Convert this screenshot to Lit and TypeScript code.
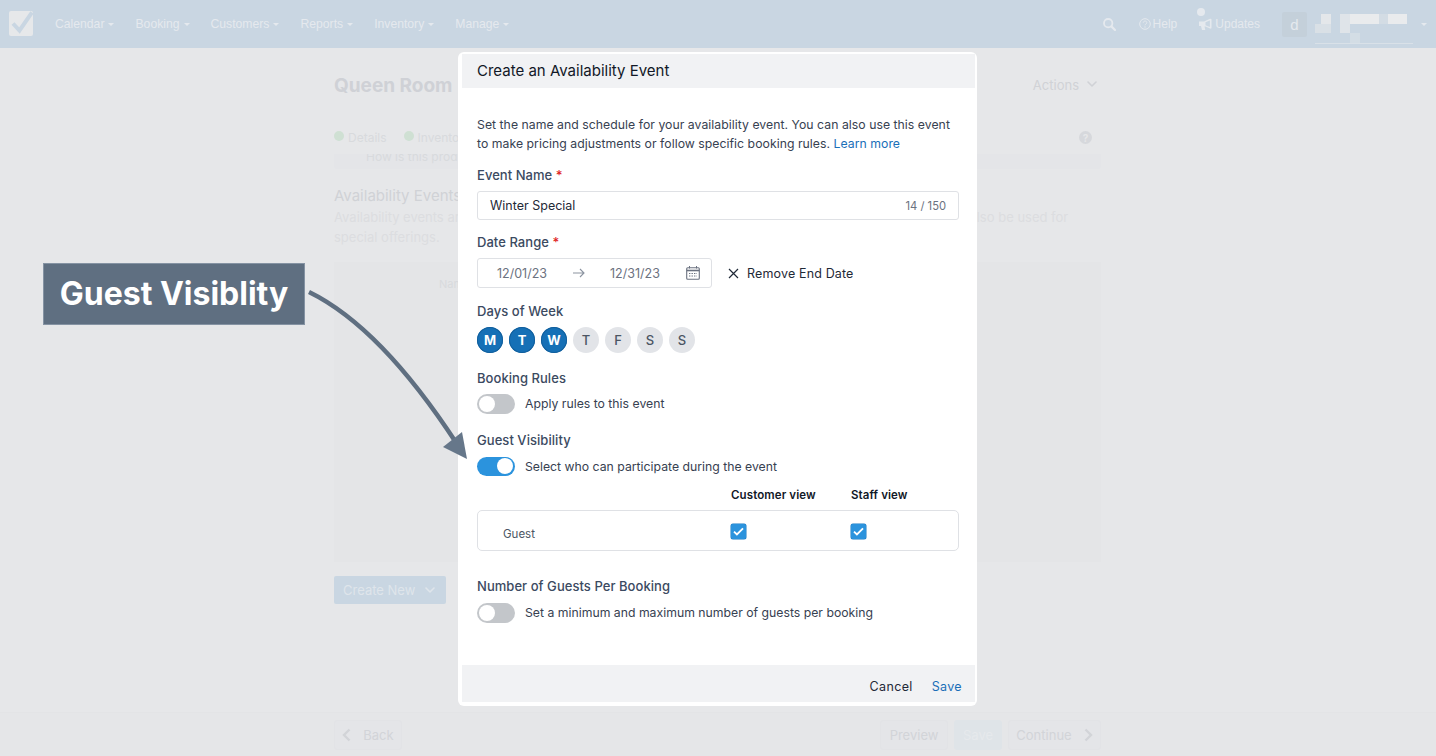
import { LitElement, html, css, svg } from 'lit'
import { customElement } from 'lit/decorators.js'

const NAV = ['Calendar', 'Booking', 'Customers', 'Reports', 'Inventory', 'Manage']
const DAYS = [
  { d: 'M', on: true },
  { d: 'T', on: true },
  { d: 'W', on: true },
  { d: 'T', on: false },
  { d: 'F', on: false },
  { d: 'S', on: false },
  { d: 'S', on: false }
]

const chevronDown = svg`<path d="M1 1l4 4 4-4" fill="none" stroke="currentColor" stroke-width="1.6" stroke-linecap="round" stroke-linejoin="round"/>`
const check = html`<svg class="check" viewBox="0 0 16 16"><path d="M3.2 8.2l3.1 3 6.5-6.600" fill="none" stroke="#fff" stroke-width="2"/></svg>`

@customElement('app-root')
export class AppRoot extends LitElement {
  static styles = css`
    :host {
      display: block;
      position: relative;
      width: 1436px;
      height: 756px;
      overflow: hidden;
      background: #e6e7e9;
      font-family: Inter, 'Liberation Sans', sans-serif;
      color: #d0d2d6;
    }

    /* top bar */
    .top {
      display: flex;
      align-items: center;
      height: 48px;
      background: #c9d6e2;
      color: #e5e9ee;
      font-family: 'Liberation Sans', sans-serif;
      font-size: 12.2px;
      padding: 0 9px 0 8px;
      box-sizing: border-box;
    }
    .logo { width: 25px; height: 26px; margin-right: 22px; flex: none; }
    .nav { display: flex; gap: 21px; }
    .nav span { display: flex; align-items: center; gap: 4px; }
    .caret {
      width: 0; height: 0;
      border-left: 3px solid transparent;
      border-right: 3px solid transparent;
      border-top: 3px solid currentColor;
    }
    .right { margin-left: auto; display: flex; align-items: center; font-size: 12px; }
    .right svg { flex: none; }
    .link { display: flex; align-items: center; gap: 3px; }
    .help { margin: 0 22px 0 23px; gap: 2px; }
    .avatar {
      width: 25px; height: 25px; margin: 1px 8px 0 22px;
      display: flex; align-items: center; justify-content: center;
      background: #c4d0da; border-radius: 2px; font-size: 15px;
    }
    .bell { position: relative; }
    .dot {
      position: absolute; left: -2px; top: -9px;
      width: 8px; height: 8px; border-radius: 50%; background: #e5e9ee;
    }
    .user-caret { margin-left: 8px; }

    /* page behind the dialog */
    .page { width: 767px; margin-left: 334px; height: 664px; }
    .title-row { display: flex; justify-content: space-between; align-items: center; height: 75px; box-sizing: border-box; }
    .title-row h1 { margin: 0; font-size: 19px; font-weight: 700; color: #cfd1d6; }
    .actions { display: flex; align-items: center; gap: 8px; font-size: 13px; color: #d0d2d6; margin: 0 4px 2px 0; }
    .actions svg { width: 10px; height: 7px; }
    .steps { display: flex; align-items: center; gap: 17px; height: 29px; font-size: 12px; color: #d8dadd; }
    .steps span { display: flex; align-items: center; gap: 4px; }
    .steps i { width: 10px; height: 10px; border-radius: 50%; background: #cfe0d3; margin-top: -3px; }
    .qmark {
      margin-left: auto; margin-right: 9px; width: 13px; height: 13px; border-radius: 50%;
      background: #d6d8dc; color: #e6e7e9; font-size: 10px; font-weight: 700;
      display: flex; align-items: center; justify-content: center;
    }
    .how {
      margin: 2px 0 17px; height: 15px; line-height: 6px; overflow: hidden; font-size: 12px; color: #d8dadd;
      padding-left: 32px; background: #e4e5e8; border-radius: 0 0 3px 3px;
      box-sizing: border-box;
    }
    .page h2 { margin: 0 0 1px; font-size: 15px; font-weight: 400; color: #d0d2d6; line-height: 20px; }
    .desc { margin: 0; font-size: 13px; line-height: 20px; color: #dcdde0; white-space: nowrap; }
    .panel {
      margin-top: 15px; height: 300px; padding: 15px 0 0 105px; box-sizing: border-box;
      background: #e4e5e7; font-size: 11px; color: #d8dadd;
    }
    .create {
      margin-top: 14px; width: 112px; height: 28px; border-radius: 2px;
      background: #c9d6e2; color: #dfe5eb; font-size: 13px;
      display: flex; align-items: center; justify-content: space-between; padding: 0 11px 0 9px;
      box-sizing: border-box;
    }
    .create svg { width: 10px; height: 7px; }
    .bar { height: 44px; border-top: 1px solid #e3e4e6; background: #e5e6e8; box-sizing: border-box; }
    .bar-in { display: flex; align-items: center; gap: 6px; width: 767px; height: 43px; margin-left: 334px; }
    .foot {
      display: flex; align-items: center; justify-content: center; gap: 12px;
      height: 30px; border-radius: 3px;
      background: #e4e5e8; border: 1px solid #e2e3e6; font-size: 13px; color: #d2d4d8;
      box-sizing: border-box;
    }
    .foot svg { width: 9px; height: 14px; }
    .foot.back { width: 68px; margin-right: auto; }
    .foot.preview { width: 68px; }
    .foot.primary { width: 48px; background: #dfe4e8; border-color: #dfe4e8; color: #e6e9ec; }
    .foot.next { width: 93px; }

    /* dialog */
    .dialog {
      position: absolute; left: 458px; top: 52px; width: 519px; height: 654px;
      background: #fff; border-radius: 6px; box-sizing: border-box;
      padding: 2px 2px 4px 4px;
      display: flex; flex-direction: column;
      color: #1f2937;
    }
    .d-head {
      height: 34px; display: flex; align-items: center; padding: 0 0 2px 15px; box-sizing: border-box;
      background: #f1f2f4; font-size: 15px; color: #111827; flex: none;
    }
    .d-body {
      flex: 1; padding: 27px 16px 0 15px; font-size: 12.25px; color: #374151;
    }
    .intro { margin: 0 0 14px; line-height: 19px; letter-spacing: 0.03px; }
    a { color: #1a6fb8; text-decoration: none; }
    .label { font-size: 13px; font-weight: 500; line-height: 16px; color: #3b4a61; letter-spacing: 0.05px; }
    .req { color: #e02424; }
    .input {
      display: flex; align-items: center; justify-content: space-between;
      margin-top: 8px; height: 29px; padding: 0 12px;
      border: 1px solid #dfe1e5; border-radius: 3px; box-sizing: border-box;
      color: #1f2937; font-size: 12.5px;
    }
    .count { font-size: 11.2px; color: #6b7280; }
    .date-row { display: flex; align-items: center; margin-top: 8px; font-size: 12.5px; }
    .date {
      display: flex; align-items: center; width: 235px; height: 30px; box-sizing: border-box;
      border: 1px solid #dfe1e5; border-radius: 3px; padding: 0 11px 0 19px; color: #6b7280;
    }
    .date svg.arr { margin: 0 25px 0 26px; }
    .date .cal { margin-left: auto; }
    .remove { display: flex; align-items: center; gap: 8px; margin-left: 16px; color: #1f2937; letter-spacing: 0.15px; }
    .days { display: flex; gap: 6px; margin-top: 8px; }
    .day {
      width: 26px; height: 26px; border-radius: 50%;
      display: flex; align-items: center; justify-content: center;
      background: #e2e4e8; color: #4b5563; font-size: 13px; font-weight: 500;
    }
    .day.on { background: #1670b6; color: #fff; font-weight: 700; box-shadow: inset 0 0 0 1px #125f9c; }
    .sw-row { display: flex; align-items: center; gap: 10px; margin-top: 8px; }
    .sw {
      position: relative; width: 38px; height: 19.5px; border-radius: 10px; background: #c3c6ca; flex: none;
    }
    .sw::after {
      content: ''; position: absolute; left: 2px; top: 1.75px; width: 16px; height: 16px;
      border-radius: 50%; background: #fff;
    }
    .sw.on { background: #2b93dd; }
    .sw.on::after { left: 20px; }
    .cols {
      display: grid; grid-template-columns: 254px 120px 1fr; margin-top: 11px;
      font-size: 11.5px; font-weight: 600; color: #111827; line-height: 16px; letter-spacing: 0.1px;
    }
    .guest {
      display: grid; grid-template-columns: 253px 120px 1fr; align-items: center;
      margin-top: 7px; height: 41px; border: 1px solid #dfe1e5; border-radius: 5px;
      box-sizing: border-box; font-size: 11.5px; color: #4b5563;
    }
    .guest .name { padding: 6px 0 0 25px; }
    .guest .cell { margin-top: 1px; }
    .box {
      width: 15px; height: 15px; border-radius: 2px; background: #2b93dd; display: block;
      box-shadow: 0 0 0 0.5px #1c7cc4;
    }
    .check { width: 15px; height: 15px; display: block; }
    .d-foot {
      flex: none; height: 37px; display: flex; align-items: center; justify-content: flex-end; gap: 19px;
      background: #f1f2f4; padding: 5px 13px 0 0; box-sizing: border-box; font-size: 12.5px; color: #1f2937; letter-spacing: 0.35px;
    }

    /* annotation */
    .note {
      position: absolute; left: 43px; top: 263px; width: 262px; height: 62px; padding-bottom: 1px;
      background: #5f6f81; border: 1px solid #8593a3; box-sizing: border-box;
      display: flex; align-items: center; justify-content: center;
      color: #fff; font-family: Inter, sans-serif; font-weight: 700; font-size: 32px;
    }
    .arrow { position: absolute; left: 0; top: 0; width: 1436px; height: 756px; pointer-events: none; }
  `

  render () {
    return html`
      <div class="top">
        <svg class="logo" viewBox="0 0 25 26">
          <rect x="1" y="0" width="24" height="25" rx="2" fill="#e6e8ea"/>
          <path d="M5 12.500l6.500 7L24 1.500" fill="none" stroke="#c9d6e2" stroke-width="4"/>
        </svg>
        <div class="nav">
          ${NAV.map(n => html`<span>${n}<i class="caret"></i></span>`)}
        </div>
        <div class="right">
          <svg width="13" height="13" viewBox="0 0 13 13"><circle cx="5.2" cy="5.2" r="4.2" fill="none" stroke="currentColor" stroke-width="1.8"/><path d="M8.4 8.4l3.6 3.6" stroke="currentColor" stroke-width="2.2" stroke-linecap="round"/></svg>
          <span class="link help">
            <svg width="12" height="12" viewBox="0 0 12 12"><circle cx="6" cy="6" r="5.3" fill="none" stroke="currentColor"/><path d="M4.3 4.7c0-2.2 3.5-2.2 3.5 0 0 1.4-1.800 1.300-1.800 2.600" fill="none" stroke="currentColor"/><circle cx="6" cy="9" r=".7" fill="currentColor"/></svg>
            Help
          </span>
          <span class="link bell">
            <i class="dot"></i>
            <svg width="13" height="13" viewBox="0 0 13 13"><path d="M0 3.500h5L11 .8c.8-.3 1.500 0 1.500.8v8.200c0 .8-.7 1.100-1.500.8L6.500 8.500h-1l.8 3.500H3L2 8H0z" fill="currentColor"/><path d="M6.500 4.200l4.400-1.800v6.600L6.500 7.200z" fill="#c9d6e2"/></svg>
            Updates
          </span>
          <span class="avatar">d</span>
          <svg width="98" height="40" viewBox="0 0 98 40">
            <rect x="0" y="20" width="16" height="9" fill="#d9e0e6"/>
            <rect x="6" y="10" width="10" height="10" fill="#e4e7ea"/>
            <rect x="25" y="10" width="10" height="19" fill="#dfe4e9"/>
            <rect x="35" y="10" width="29" height="10" fill="#e9ebed"/>
            <rect x="64" y="10" width="9" height="10" fill="#d3dce4"/>
            <rect x="73" y="10" width="19" height="10" fill="#e9ebed"/>
            <rect x="35" y="29" width="10" height="10" fill="#d3dde5"/>
            <rect x="0" y="39" width="98" height="1" fill="#d9e1e8"/>
          </svg>
          <i class="caret user-caret"></i>
        </div>
      </div>

      <div class="page">
        <div class="title-row">
          <h1>Queen Room</h1>
          <div class="actions">Actions <svg viewBox="0 0 10 7">${chevronDown}</svg></div>
        </div>
        <div class="steps">
          <span><i></i>Details</span>
          <span><i></i>Inventory</span>
          <div class="qmark">?</div>
        </div>
        <div class="how">How is this product priced?</div>
        <h2>Availability Events</h2>
        <p class="desc">Availability events are used to block out or open up times on your calendar for certain weeks. They can also be used for<br>special offerings.</p>
        <div class="panel">Name</div>
        <div class="create">Create New <svg viewBox="0 0 10 7">${chevronDown}</svg></div>
      </div>
      <div class="bar">
        <div class="bar-in">
          <div class="foot back">
            <svg viewBox="0 0 9 14"><path d="M7.500 1.500L2 7l5.500 5.500" fill="none" stroke="currentColor" stroke-width="2.400"/></svg>
            Back
          </div>
          <div class="foot preview">Preview</div>
          <div class="foot primary">Save</div>
          <div class="foot next">Continue
            <svg viewBox="0 0 9 14"><path d="M1.500 1.500L7 7l-5.500 5.500" fill="none" stroke="currentColor" stroke-width="2.400"/></svg>
          </div>
        </div>
      </div>

      <div class="dialog">
        <div class="d-head">Create an Availability Event</div>
        <div class="d-body">
          <p class="intro">Set the name and schedule for your availability event. You can also use this event<br>to make pricing adjustments or follow specific booking rules. <a>Learn more</a></p>

          <div class="label">Event Name <span class="req">*</span></div>
          <div class="input"><span>Winter Special</span><span class="count">14 / 150</span></div>

          <div class="label" style="margin-top:14px">Date Range <span class="req">*</span></div>
          <div class="date-row">
            <div class="date">
              <span>12/01/23</span>
              <svg class="arr" width="12" height="10" viewBox="0 0 12 10"><path d="M0 5h11M7 1l4 4-4 4" fill="none" stroke="#8b93a0" stroke-width="1.1"/></svg>
              <span>12/31/23</span>
              <svg class="cal" width="14" height="14" viewBox="0 0 14 14"><rect x=".7" y="1.700" width="12.600" height="11.600" rx="1" fill="none" stroke="#6b7280" stroke-width="1.100"/><path d="M.7 4.500h12.600" stroke="#6b7280" stroke-width="1.600"/><path d="M3.500 0v2.500M10.500 0v2.500" stroke="#6b7280"/><path d="M3 7.500h8M3 10h8" stroke="#6b7280" stroke-width="1.200" stroke-dasharray="1.400 1.100"/></svg>
            </div>
            <div class="remove">
              <svg width="11" height="11" viewBox="0 0 11 11"><path d="M1 1l9 9M10 1l-9 9" stroke="#1f2937" stroke-width="1.200"/></svg>
              Remove End Date
            </div>
          </div>

          <div class="label" style="margin-top:15px">Days of Week</div>
          <div class="days">
            ${DAYS.map(x => html`<span class="day ${x.on ? 'on' : ''}">${x.d}</span>`)}
          </div>

          <div class="label" style="margin-top:17px">Booking Rules</div>
          <div class="sw-row"><span class="sw"></span>Apply rules to this event</div>

          <div class="label" style="margin-top:18px">Guest Visibility</div>
          <div class="sw-row" style="margin-top:9px"><span class="sw on"></span>Select who can participate during the event</div>

          <div class="cols"><span></span><span>Customer view</span><span>Staff view</span></div>
          <div class="guest">
            <span class="name">Guest</span>
            <span class="cell"><i class="box">${check}</i></span>
            <span class="cell"><i class="box">${check}</i></span>
          </div>

          <div class="label" style="margin-top:27px">Number of Guests Per Booking</div>
          <div class="sw-row" style="margin-top:9px"><span class="sw"></span>Set a minimum and maximum number of guests per booking</div>
        </div>
        <div class="d-foot"><span>Cancel</span><a>Save</a></div>
      </div>

      <div class="note">Guest Visiblity</div>
      <svg class="arrow" viewBox="0 0 1436 756">
        <path d="M309 292C360 317 410 372 457 444" fill="none" stroke="#5f6f81" stroke-width="4.500"/>
        <path d="M467 459L443 447L462 432Z" fill="#66778a"/>
      </svg>
    `
  }
}
